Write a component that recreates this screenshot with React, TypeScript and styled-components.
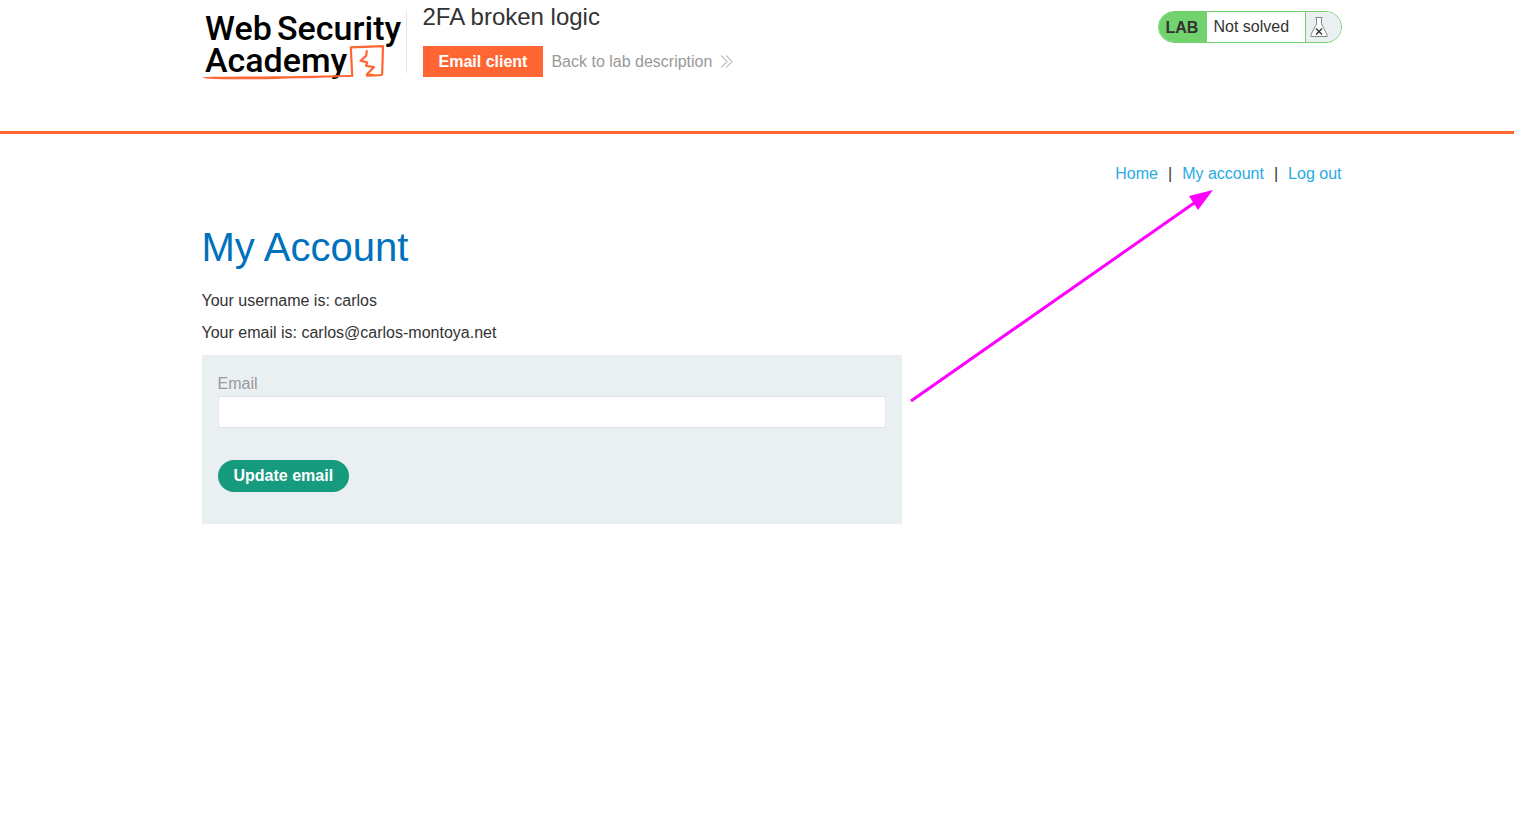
import React from "react";
import styled, { createGlobalStyle } from "styled-components";

const GlobalStyle = createGlobalStyle`
  *, *::before, *::after { box-sizing: border-box; }
  body {
    margin: 0;
    background: #ffffff;
    color: #333332;
    font: 16px/24px "Liberation Sans", Arial, sans-serif;
  }
  h1, h2, p { margin: 0; font-weight: 400; }
  a { text-decoration: none; }
  button, input { font: inherit; }
`;

const Header = styled.header`
  border-bottom: 3px solid #ff6633;
`;

const Container = styled.div`
  max-width: 1171px;
  margin: 0 auto;
  padding: 0 1px 0 30px;
`;

const HeaderRow = styled(Container)`
  display: flex;
  align-items: flex-start;
  min-height: 131px;
`;

const LogoLink = styled.a`
  display: block;
  flex: none;
  width: 200px;
  height: 72px;
  margin-top: 10px;
  color: #000000;

  svg { display: block; overflow: visible; }
  text { font: 500 34px Roboto, sans-serif; }
`;

const TitleBlock = styled.div`
  flex: 1;
  display: flex;
  margin-left: 4px;
`;

const Divider = styled.div`
  flex: none;
  width: 1px;
  height: 62px;
  margin: 11px 16px 0 0;
  background: #e2e4e5;
`;

const LabTitle = styled.h2`
  font-size: 24px;
  line-height: 34px;
  margin-bottom: 12px;
`;

const LabActions = styled.div`
  display: flex;
  align-items: center;
  gap: 8px;
`;

const EmailClientLink = styled.a`
  padding: 0 16px;
  line-height: 31px;
  background: #ff6633;
  color: #ffffff;
  font-weight: 700;
`;

const BackLink = styled.a`
  display: flex;
  align-items: center;
  gap: 8px;
  color: #999999;
`;

const LabStatus = styled.div`
  display: flex;
  flex: none;
  width: 184px;
  height: 32px;
  margin-top: 11px;
  border: 1px solid #71d26e;
  border-radius: 16px;
  overflow: hidden;
  line-height: 30px;
`;

const LabTag = styled.span`
  width: 48px;
  padding-left: 7px;
  background: #71d26e;
  font-weight: 700;
  line-height: 31px;
`;

const LabState = styled.span`
  flex: 1;
  padding-left: 7px;
`;

const LabIcon = styled.span`
  width: 36px;
  padding: 4px 0 0 4px;
  border-left: 1px solid #71d26e;
  background: #eaeff2;

  svg { display: block; }
`;

const Page = styled(Container)`
  position: relative;
  padding-top: 28px;
`;

const Nav = styled.nav`
  display: flex;
  justify-content: flex-end;
  gap: 10px;
`;

const NavLink = styled.a`
  color: #29aae2;
`;

const Heading = styled.h1`
  margin-top: 37px;
  color: #0071bc;
  font-size: 40px;
  line-height: 48px;
`;

const Details = styled.div`
  margin: 18px 0 10px;
`;

const Detail = styled.p`
  & + & { margin-top: 8px; }
`;

const Form = styled.form`
  display: flex;
  flex-direction: column;
  align-items: flex-start;
  max-width: 700px;
  padding: 16px 16px 32px;
  background: #eaeff2;
`;

const Label = styled.label`
  color: #999999;
  line-height: 25px;
`;

const EmailInput = styled.input`
  width: 100%;
  height: 32px;
  padding: 0 8px;
  border: 1px solid #e2e4e5;
  border-radius: 0;
  background: #ffffff;
  outline: none;
`;

const UpdateButton = styled.button`
  margin-top: 32px;
  padding: 0 16px;
  height: 32px;
  border: 0;
  border-radius: 16px;
  background: #169b7f;
  color: #ffffff;
  font-weight: 700;
`;

const Pointer = styled.svg`
  position: absolute;
  top: 54px;
  left: 735px;
  pointer-events: none;
`;

const Logo = () => (
  <svg width="200" height="72" viewBox="0 0 200 72" aria-hidden="true">
    <text x="3" y="30" fill="currentColor">Web</text>
    <text x="75" y="30" fill="currentColor">Security</text>
    <text x="3" y="62" fill="currentColor">Academy</text>
    <path d="M0 67 C30 66.4 90 66.6 149 65 L149 67 C132 66.8 118 68.4 96 68.2 C60 69.4 30 70 4 68.4 Z" fill="#ff6633" />
    <path
      d="M150.2 66 L148.8 37.4 L181 36.2 L180.2 63.6 Q180 65 178.6 65.2 L165 65.6"
      fill="none"
      stroke="#ff6633"
      strokeWidth="2.2"
      strokeLinejoin="round"
      strokeLinecap="round"
    />
    <path
      d="M164.8 41 L164.2 45.6 L158.6 50.8 L165.2 52.4 L164 55.8 L172 57 L164.8 64.6 L170.6 64.8"
      fill="none"
      stroke="#ff6633"
      strokeWidth="2.2"
      strokeLinejoin="round"
      strokeLinecap="round"
    />
  </svg>
);

const DoubleChevron = () => (
  <svg width="13" height="14" viewBox="0 0 13 14" fill="none" stroke="#999999" aria-hidden="true">
    <path d="M1.2 0.5 L7 6.5 L1.2 12.5 M6.2 0.5 L12 6.5 L6.2 12.5" />
  </svg>
);

const Flask = () => (
  <svg width="18" height="22" viewBox="0 0 18 22" fill="none" aria-hidden="true">
    <path d="M6.5 1.5 V8 L1 18.5 V20.5 H17 V18.5 L11.5 8 V1.5 Z" fill="#ffffff" stroke="#888888" />
    <path d="M5.5 1.5 H12.5" stroke="#888888" />
    <path d="M6 12.5 L12 18.5 M12 12.5 L6 18.5" stroke="#333332" strokeWidth="1.3" />
  </svg>
);

export default function App() {
  return (
    <>
      <GlobalStyle />
      <Header>
        <HeaderRow>
          <LogoLink href="#" aria-label="Web Security Academy">
            <Logo />
          </LogoLink>
          <TitleBlock>
            <Divider />
            <div>
              <LabTitle>2FA broken logic</LabTitle>
              <LabActions>
                <EmailClientLink href="#">Email client</EmailClientLink>
                <BackLink href="#">
                  Back to lab description
                  <DoubleChevron />
                </BackLink>
              </LabActions>
            </div>
          </TitleBlock>
          <LabStatus>
            <LabTag>LAB</LabTag>
            <LabState>Not solved</LabState>
            <LabIcon>
              <Flask />
            </LabIcon>
          </LabStatus>
        </HeaderRow>
      </Header>
      <Page as="main">
        <Nav>
          <NavLink href="#">Home</NavLink>
          <span>|</span>
          <NavLink href="#">My account</NavLink>
          <span>|</span>
          <NavLink href="#">Log out</NavLink>
        </Nav>
        <Heading>My Account</Heading>
        <Details>
          <Detail>Your username is: carlos</Detail>
          <Detail>Your email is: carlos@carlos-montoya.net</Detail>
        </Details>
        <Form onSubmit={(event) => event.preventDefault()}>
          <Label htmlFor="email">Email</Label>
          <EmailInput id="email" type="email" name="email" />
          <UpdateButton type="submit">Update email</UpdateButton>
        </Form>
        <Pointer width="310" height="218" viewBox="0 0 310 218" aria-hidden="true">
          <path d="M4 213 L290 13" stroke="#ff00ff" strokeWidth="3" />
          <path d="M306 2 L282 8 L291 22 Z" fill="#ff00ff" />
        </Pointer>
      </Page>
    </>
  );
}
